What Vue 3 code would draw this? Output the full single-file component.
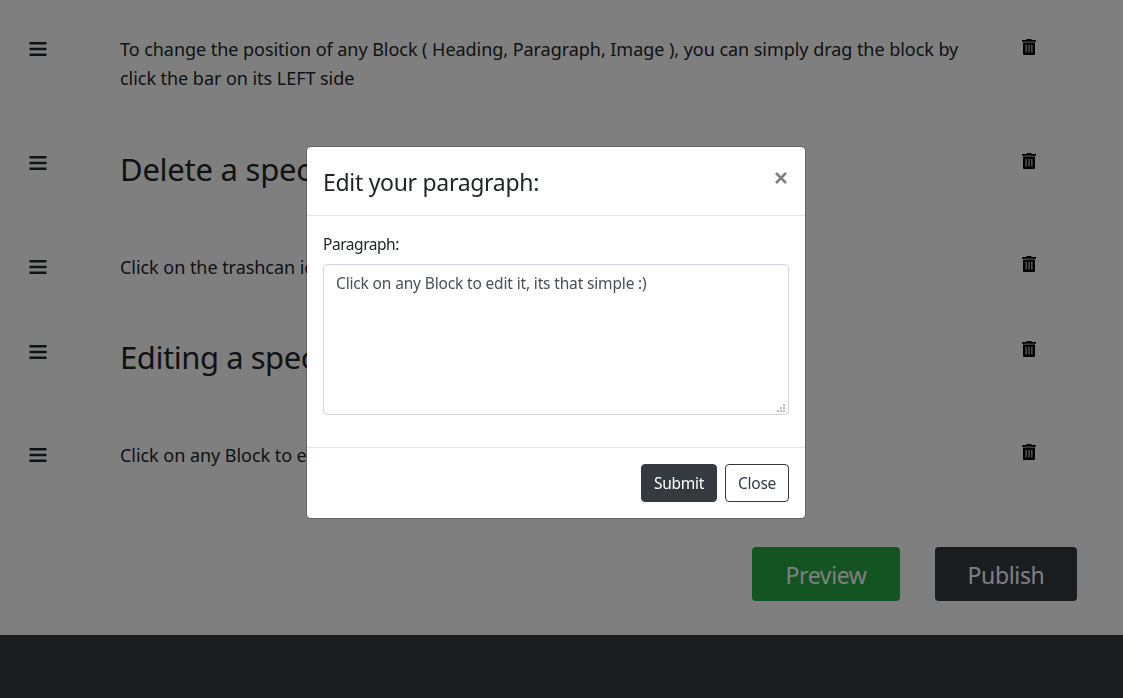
<script setup>
import { ref } from 'vue'

const blocks = [
  { type: 'paragraph', cls: 'first', text: 'To change the position of any Block ( Heading, Paragraph, Image ), you can simply drag the block by click the bar on its LEFT side' },
  { type: 'heading', cls: 'delete', text: 'Delete a spec' },
  { type: 'paragraph', cls: 'trash-help', text: 'Click on the trashcan ic' },
  { type: 'heading', cls: 'editing', text: 'Editing a spec' },
  { type: 'paragraph', cls: 'edit-help', text: 'Click on any Block to e' },
]
const paragraph = ref('Click on any Block to edit it, its that simple :)')
</script>

<template>
  <div class="page">
    <main class="editor">
      <section v-for="block in blocks" :key="block.text" class="row" :class="block.cls">
        <svg class="bars" width="18" height="16" viewBox="0 0 18 16">
          <path d="M.5 1h17v2.4H.5zM.5 6.8h17v2.4H.5zM.5 12.6h17V15H.5z" />
        </svg>
        <h2 v-if="block.type === 'heading'">{{ block.text }}</h2>
        <p v-else>{{ block.text }}</p>
        <svg class="trash" width="14" height="16" viewBox="0 0 14 16">
          <path fill-rule="evenodd" d="M0 1h4l1-1h4l1 1h4v1.8H0zM1 3.6h12V15q0 1-1 1H2q-1 0-1-1zM3.6 5.8v7.8h1V5.8zM6.5 5.8v7.8h1V5.8zM9.4 5.8v7.8h1V5.8z" />
        </svg>
      </section>
      <div class="actions">
        <button class="big preview"><span>Preview</span></button>
        <button class="big publish"><span>Publish</span></button>
      </div>
    </main>
    <footer class="bottom"></footer>
  </div>
  <div class="backdrop">
    <div class="modal">
      <header>
        <h4>Edit your paragraph:</h4>
        <button class="dismiss" aria-label="Close">
          <svg width="12" height="12" viewBox="0 0 12 12"><path d="M1 1l10 10M11 1L1 11" /></svg>
        </button>
      </header>
      <div class="body">
        <label for="paragraph">Paragraph:</label>
        <div class="field">
          <textarea id="paragraph" v-model="paragraph" spellcheck="false"></textarea>
          <svg class="grip" width="8" height="8" viewBox="0 0 8 8">
            <path d="M6 0h2v2H6zM3 3h2v2H3zM6 3h2v2H6zM0 6h2v2H0zM3 6h2v2H3zM6 6h2v2H6z" />
          </svg>
        </div>
      </div>
      <div class="foot">
        <button class="btn submit"><span>Submit</span></button>
        <button class="btn close"><span>Close</span></button>
      </div>
    </div>
  </div>
</template>

<style>
body {
  overflow: hidden;
  background: #fff;
}
</style>

<style scoped>
* {
  box-sizing: border-box;
}
.page,
.backdrop {
  font-family: "Noto Sans", "Open Sans", sans-serif;
  color: #212529;
}
.page {
  display: flex;
  flex-direction: column;
  height: 698px;
}
.editor {
  height: 635px;
  padding-top: 35px;
}
.row {
  display: grid;
  grid-template-columns: 91px 850px 14px;
  padding-left: 29px;
  align-items: start;
  height: 103.4px;
}
.row.first {
  height: 113.6px;
}
.row.trash-help {
  height: 84.8px;
}
.bars {
  margin-top: 6px;
  fill: #212529;
}
.trash-help .bars,
.editing .bars,
.edit-help .bars {
  margin-top: 7px;
}
.trash {
  margin: 4px 0 0 52px;
  fill: #000;
}
p,
h2,
h4 {
  margin: 0;
  font-weight: 400;
}
p {
  font-size: 18px;
  line-height: 28.8px;
  letter-spacing: -0.045px;
}
.trash-help p,
.edit-help p {
  padding-top: 1px;
}
h2 {
  padding-top: 1px;
  font-size: 31px;
  line-height: 38.4px;
  letter-spacing: -0.25px;
  white-space: nowrap;
}
.editing h2 {
  letter-spacing: -0.45px;
}
.actions {
  display: flex;
  gap: 35px;
  justify-content: flex-end;
  padding: 3px 46px 0 0;
}
button {
  font-family: inherit;
  padding: 0;
}
.big {
  height: 54px;
  padding-top: 2px;
  border: 0;
  border-radius: 4px;
  color: #fff;
  font-size: 23px;
  letter-spacing: -0.35px;
}
.preview {
  width: 148px;
  background: #28a745;
}
.publish {
  width: 142px;
  background: #343a40;
}
.bottom {
  flex: 1;
  background: #343a40;
}
.backdrop {
  position: fixed;
  inset: 0;
  padding: 146px 0 0 306px;
  background: rgba(0, 0, 0, 0.5);
}
.modal {
  width: 500px;
  height: 373px;
  border: 1px solid rgba(0, 0, 0, 0.2);
  border-radius: 5px;
  background: #fff;
  background-clip: padding-box;
}
header {
  display: flex;
  justify-content: space-between;
  height: 69px;
  padding: 16px;
  border-bottom: 1px solid #e3e6e9;
}
h4 {
  padding-top: 1px;
  font-size: 23px;
  line-height: 36px;
  letter-spacing: -0.3px;
}
.dismiss {
  display: flex;
  width: 17px;
  height: 30px;
  border: 0;
  background: none;
  align-items: center;
  justify-content: center;
}
.dismiss path {
  fill: none;
  stroke: #7f7f7f;
  stroke-width: 2.5;
}
.body {
  height: 231px;
  padding: 16px;
}
label {
  display: block;
  margin-bottom: 8px;
  font-size: 15.5px;
  line-height: 24px;
  letter-spacing: -0.45px;
}
.field {
  position: relative;
  height: 151px;
}
textarea {
  display: block;
  width: 466px;
  height: 151px;
  padding: 6px 12px;
  border: 1px solid #ced4da;
  border-radius: 4px;
  outline: 0;
  resize: none;
  font-family: inherit;
  font-size: 15.5px;
  line-height: 24px;
  letter-spacing: -0.155px;
  color: #495057;
}
.grip {
  position: absolute;
  right: 4px;
  bottom: 3px;
  fill: #bbb;
}
.foot {
  display: flex;
  gap: 8px;
  justify-content: flex-end;
  padding: 16px;
  border-top: 1px solid #e3e6e9;
}
.btn {
  height: 38px;
  border: 1px solid #343a40;
  border-radius: 4px;
  font-size: 15.5px;
  letter-spacing: -0.25px;
}
.submit {
  width: 76px;
  color: #fff;
  background: #343a40;
}
.close {
  width: 64px;
  color: #343a40;
  background: #fff;
}
</style>
